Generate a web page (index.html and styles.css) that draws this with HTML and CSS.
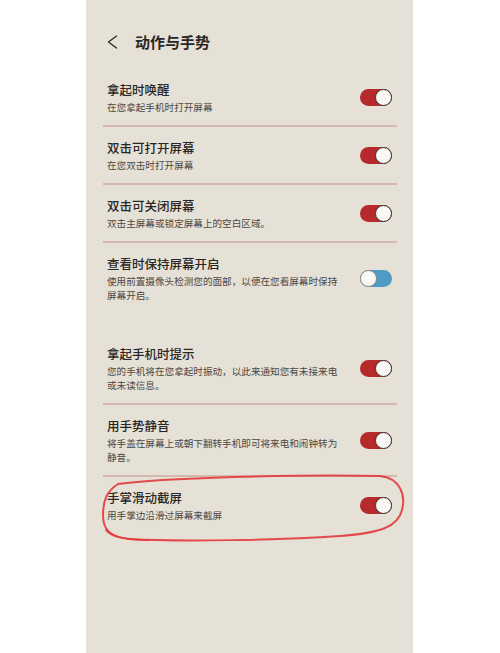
FILE: index.html
```html
<!DOCTYPE html>
<html lang="zh-CN">
<head>
<meta charset="utf-8">
<title>动作与手势</title>
<link rel="stylesheet" href="styles.css">
</head>
<body>
<div class="screen">
  <header class="appbar">
    <svg class="back" width="12" height="14" viewBox="0 0 12 14"><path d="M9.5 1 L1.5 7 L9.5 13" fill="none" stroke="#2b2724" stroke-width="1.3" stroke-linecap="round" stroke-linejoin="round"/></svg>
    <h1 class="appbar-title">动作与手势</h1>
  </header>
  <ul class="list">
    <li class="item">
      <div class="text"><div class="title">拿起时唤醒</div><div class="desc">在您拿起手机时打开屏幕</div></div>
      <span class="switch on"></span>
    </li>
    <li class="item">
      <div class="text"><div class="title">双击可打开屏幕</div><div class="desc">在您双击时打开屏幕</div></div>
      <span class="switch on"></span>
    </li>
    <li class="item">
      <div class="text"><div class="title">双击可关闭屏幕</div><div class="desc">双击主屏幕或锁定屏幕上的空白区域。</div></div>
      <span class="switch on"></span>
    </li>
    <li class="item item-last">
      <div class="text"><div class="title">查看时保持屏幕开启</div><div class="desc">使用前置摄像头检测您的面部，以便在您看屏幕时保持屏幕开启。</div></div>
      <span class="switch off"></span>
    </li>
    <li class="item item-section">
      <div class="text"><div class="title">拿起手机时提示</div><div class="desc">您的手机将在您拿起时振动，以此来通知您有未接来电或未读信息。</div></div>
      <span class="switch on"></span>
    </li>
    <li class="item">
      <div class="text"><div class="title">用手势静音</div><div class="desc">将手盖在屏幕上或朝下翻转手机即可将来电和闹钟转为静音。</div></div>
      <span class="switch on"></span>
    </li>
    <li class="item item-last">
      <div class="text"><div class="title">手掌滑动截屏</div><div class="desc">用手掌边沿滑过屏幕来截屏</div></div>
      <span class="switch on"></span>
    </li>
  </ul>
  <svg class="annotation" width="327" height="653" viewBox="86 0 327 653">
    <path d="M118 484 C160 478, 300 474, 380 476 C400 478, 406 495, 402 510 C398 527, 380 533, 340 536 C280 540, 180 542, 130 539 C110 537, 103 530, 103 515 C103 500, 107 491, 118 484" fill="none" stroke="#e23b3c" stroke-width="2" stroke-linecap="round" opacity="0.9"/>
    <path d="M106 530 C112 537, 124 540, 150 540" fill="none" stroke="#e23b3c" stroke-width="2" stroke-linecap="round" opacity="0.85"/>
  </svg>
</div>
</body>
</html>
```
FILE: styles.css
```css
* { box-sizing: border-box; }
html, body { margin: 0; padding: 0; background: #ffffff; }
body {
  font-family: "Noto Sans CJK SC", "Noto Sans", sans-serif;
  color: #2b2724;
}
.screen {
  position: relative;
  width: 327px;
  height: 653px;
  margin-left: 86px;
  background: #e6e1d6;
  overflow: hidden;
}
.appbar {
  display: flex;
  align-items: center;
  height: 69px;
  padding: 30px 0 15px 21px;
}
.back { display: block; flex: none; }
.appbar-title {
  margin: 0 0 0 16px;
  font-size: 15px;
  line-height: 24px;
  font-weight: 700;
  color: #2b2724;
}
.list { list-style: none; margin: 0; padding: 0; }
.item {
  display: flex;
  align-items: center;
  justify-content: space-between;
  margin: 0 16px 0 17px;
  padding: 12px 5px 11px 4px;
  border-bottom: 2px solid #d6b8af;
}
.item-last { border-bottom: none; }
.item-section { margin-top: 20px; }
.text { width: 236px; }
.title {
  font-size: 12.5px;
  line-height: 18px;
  font-weight: 500;
  color: #2a2623;
}
.desc {
  margin-top: 1px;
  font-size: 9.6px;
  line-height: 14px;
  color: #4d4743;
}
.switch {
  position: relative;
  flex: none;
  width: 32px;
  height: 17px;
  border-radius: 9px;
}
.switch::after {
  content: "";
  position: absolute;
  top: 0;
  width: 17px;
  height: 17px;
  border-radius: 50%;
  background: #faf8f4;
  box-sizing: border-box;
}
.switch.on { background: #b62a2b; }
.switch.on::after { right: 0; border: 1.2px solid #3a3330; }
.switch.off { background: #4f9bc6; }
.switch.off::after { left: 0; border: 1.2px solid #8e8a86; }
.annotation {
  position: absolute;
  top: 0;
  left: 0;
  pointer-events: none;
}
```
